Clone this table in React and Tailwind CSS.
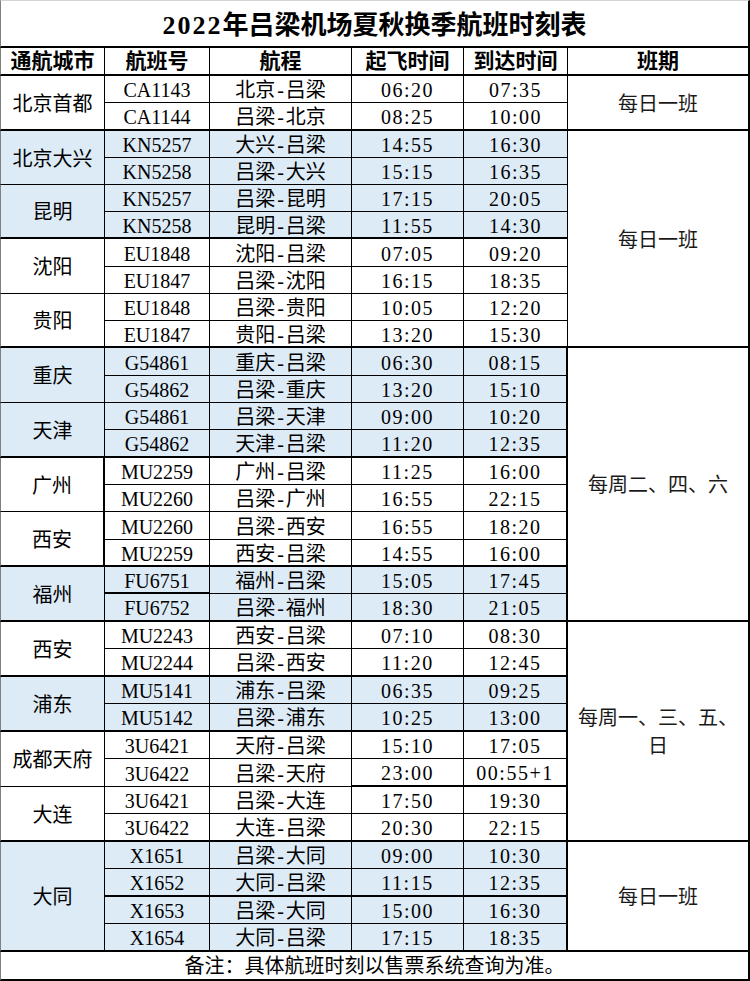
import React from "react";

const groups = [
  ["北京首都", false, [["CA1143", "北京-吕梁", "06:20", "07:35"], ["CA1144", "吕梁-北京", "08:25", "10:00"]]],
  ["北京大兴", true, [["KN5257", "大兴-吕梁", "14:55", "16:30"], ["KN5258", "吕梁-大兴", "15:15", "16:35"]]],
  ["昆明", true, [["KN5257", "吕梁-昆明", "17:15", "20:05"], ["KN5258", "昆明-吕梁", "11:55", "14:30"]]],
  ["沈阳", false, [["EU1848", "沈阳-吕梁", "07:05", "09:20"], ["EU1847", "吕梁-沈阳", "16:15", "18:35"]]],
  ["贵阳", false, [["EU1848", "吕梁-贵阳", "10:05", "12:20"], ["EU1847", "贵阳-吕梁", "13:20", "15:30"]]],
  ["重庆", true, [["G54861", "重庆-吕梁", "06:30", "08:15"], ["G54862", "吕梁-重庆", "13:20", "15:10"]]],
  ["天津", true, [["G54861", "吕梁-天津", "09:00", "10:20"], ["G54862", "天津-吕梁", "11:20", "12:35"]]],
  ["广州", false, [["MU2259", "广州-吕梁", "11:25", "16:00"], ["MU2260", "吕梁-广州", "16:55", "22:15"]]],
  ["西安", false, [["MU2260", "吕梁-西安", "16:55", "18:20"], ["MU2259", "西安-吕梁", "14:55", "16:00"]]],
  ["福州", true, [["FU6751", "福州-吕梁", "15:05", "17:45"], ["FU6752", "吕梁-福州", "18:30", "21:05"]]],
  ["西安", false, [["MU2243", "西安-吕梁", "07:10", "08:30"], ["MU2244", "吕梁-西安", "11:20", "12:45"]]],
  ["浦东", true, [["MU5141", "浦东-吕梁", "06:35", "09:25"], ["MU5142", "吕梁-浦东", "10:25", "13:00"]]],
  ["成都天府", false, [["3U6421", "天府-吕梁", "15:10", "17:05"], ["3U6422", "吕梁-天府", "23:00", "00:55+1"]]],
  ["大连", false, [["3U6421", "吕梁-大连", "17:50", "19:30"], ["3U6422", "大连-吕梁", "20:30", "22:15"]]],
  ["大同", true, [["X1651", "吕梁-大同", "09:00", "10:30"], ["X1652", "大同-吕梁", "11:15", "12:35"], ["X1653", "吕梁-大同", "15:00", "16:30"], ["X1654", "大同-吕梁", "17:15", "18:35"]]],
];

const periods = {
  0: [2, "每日一班"],
  2: [8, "每日一班"],
  10: [10, "每周二、四、六"],
  20: [8, "每周一、三、五、\n日"],
  28: [4, "每日一班"],
};

const spanClass = {
  2: "row-span-2",
  4: "row-span-4",
  8: "row-span-8",
  10: "row-span-10",
};

const thickRows = new Set([2, 6, 10, 14, 18, 20, 22, 24, 28, 32]);

function thickTop(row, col) {
  if (thickRows.has(row)) return true;
  if (row === 19 && col === 1) return true;
  if (row === 26 && (col === 3 || col === 4)) return true;
  if (row === 30 && col >= 1 && col <= 4) return true;
  return false;
}

function thickRight(rowStart, col) {
  if (col === 5) return true;
  if (col === 4 && rowStart >= 10) return true;
  if (col === 0 && (rowStart === 14 || rowStart === 16)) return true;
  return false;
}

const font = "font-['Liberation_Serif','Noto_Sans_CJK_SC',serif]";

function Cell({ row, col, span = 1, blue, children, extra = "" }) {
  const b = thickTop(row + span, col) ? "border-b-2" : "border-b";
  const r = thickRight(row, col) ? "border-r-2" : "border-r";
  const l = col === 0 ? "border-l border-l-[#808080]" : "";
  const bg = blue ? "bg-[#ddebf7]" : "bg-white";
  const sp = span > 1 ? spanClass[span] : "";
  return (
    <div
      className={`${sp} ${b} ${r} ${l} ${bg} border-black flex items-center justify-center text-center text-[20px] text-black pt-[2px] ${extra}`}
    >
      {children}
    </div>
  );
}

function Route({ text }) {
  const [a, b] = text.split("-");
  return (
    <span className="leading-none">
      {a}
      <span className="mx-[2px]">-</span>
      {b}
    </span>
  );
}

export default function App() {
  const cells = [];
  let row = 0;
  groups.forEach(([city, blue, flights]) => {
    flights.forEach((f, fi) => {
      const r = row;
      if (fi === 0) {
        cells.push(
          <Cell key={`c${r}`} row={r} col={0} span={flights.length} blue={blue}>
            <span className="leading-none">{city}</span>
          </Cell>
        );
      }
      cells.push(
        <Cell key={`f${r}`} row={r} col={1} blue={blue}>
          <span className="leading-none">{f[0]}</span>
        </Cell>
      );
      cells.push(
        <Cell key={`r${r}`} row={r} col={2} blue={blue}>
          <Route text={f[1]} />
        </Cell>
      );
      cells.push(
        <Cell key={`d${r}`} row={r} col={3} blue={blue}>
          <span className="leading-none tracking-[1.5px]">{f[2]}</span>
        </Cell>
      );
      cells.push(
        <Cell key={`a${r}`} row={r} col={4} blue={blue}>
          <span className="leading-none tracking-[1.5px]">{f[3]}</span>
        </Cell>
      );
      if (periods[r]) {
        const [span, text] = periods[r];
        const parts = text.split("\n");
        cells.push(
          <Cell key={`p${r}`} row={r} col={5} span={span} blue={false}>
            <span className="block leading-[28px] text-center text-[#1a1a1a]">
              {parts.map((p, i) => (
                <React.Fragment key={i}>
                  {i > 0 && <br />}
                  {p}
                </React.Fragment>
              ))}
            </span>
          </Cell>
        );
      }
      row += 1;
    });
  });

  const headers = ["通航城市", "航班号", "航程", "起飞时间", "到达时间", "班期"];

  return (
    <div className={`w-[750px] h-[981px] bg-white ${font}`}>
      <div className="grid grid-cols-[105px_105px_142px_112px_104px_182px] grid-rows-[48px_28px_27px_28px_27px_27px_27px_27px_28px_27px_27px_27px_28px_27px_27px_28px_27px_27px_28px_27px_27px_28px_27px_28px_27px_28px_27px_28px_27px_28px_27px_28px_27px_28px_29px]">
        <div className="col-span-6 border-t border-t-[#d4d4d4] border-l border-l-[#808080] border-r-2 border-r-black border-b-2 border-b-black flex items-center justify-center text-[26px] font-bold leading-none text-black pt-[4px]">
          <span className="tracking-[2px]">2022</span>年吕梁机场夏秋换季航班时刻表
        </div>
        {headers.map((h, i) => (
          <div
            key={h}
            className={`${i === 0 ? "border-l border-l-[#808080]" : ""} ${i === 5 ? "border-r-2" : "border-r"} border-b-2 border-black flex items-center justify-center text-[21px] font-bold leading-none text-black pt-[1px]`}
          >
            {h}
          </div>
        ))}
        {cells}
        <div className="col-span-6 border-l border-l-[#808080] border-r-2 border-r-black border-b-2 border-b-black flex items-center justify-center text-[20px] leading-none text-black pt-[1px]">
          备注：具体航班时刻以售票系统查询为准。
        </div>
      </div>
    </div>
  );
}
